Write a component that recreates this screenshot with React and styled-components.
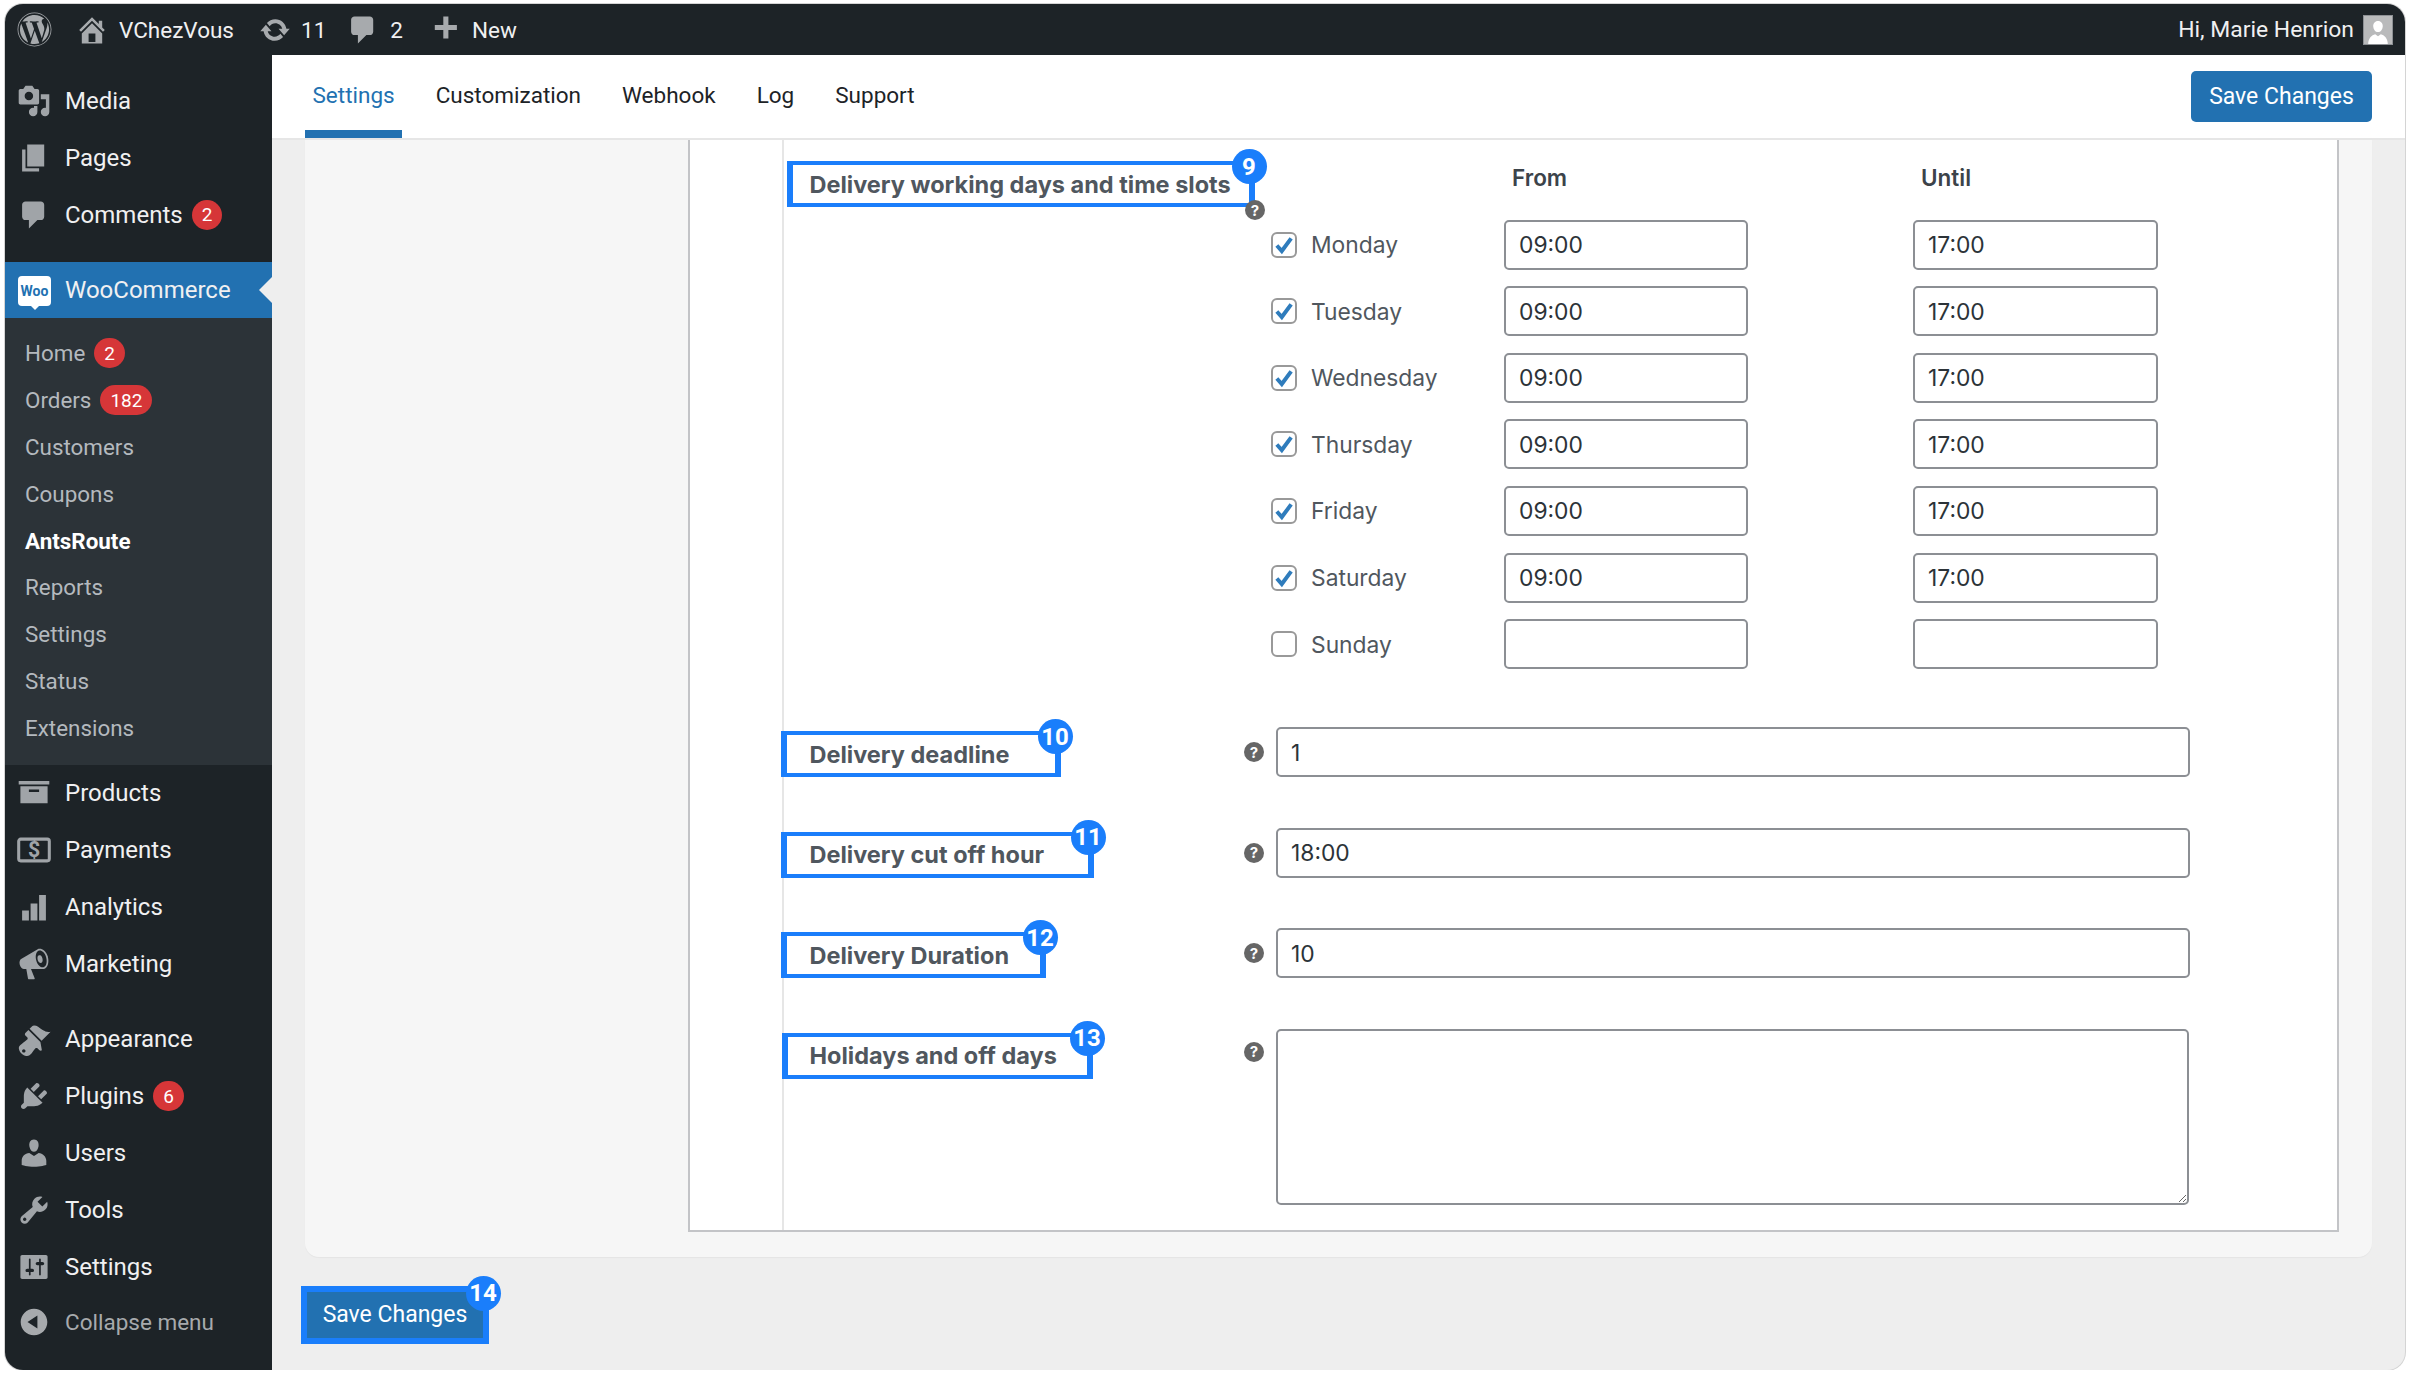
import React from 'react';
import styled, {createGlobalStyle} from 'styled-components';
import {FaWordpress} from 'react-icons/fa';

const GlobalStyle = createGlobalStyle`
    html, body {
        margin: 0;
        background: #fff;
        overflow: hidden;
    }
    body, input, textarea, button {
        font-family: Roboto, "Liberation Sans", sans-serif;
    }
`;

const ICONS = {
    home: 'M16 8.5l1.53 1.53-1.06 1.06L10 4.62l-6.47 6.47-1.06-1.06L10 2.5l4 4v-2h2v4zm-6-2.46l6 5.99V18H4v-5.97zM12 17v-5H8v5h4z',
    update: 'M10.2 3.28c3.53 0 6.43 2.61 6.92 6h2.08l-3.5 4-3.5-4h2.32c-.45-1.97-2.21-3.45-4.32-3.45-1.45 0-2.73.71-3.54 1.78L4.95 5.66C6.23 4.2 8.11 3.28 10.2 3.28zm-.4 13.44c-3.52 0-6.43-2.61-6.92-6H.8l3.5-4c1.17 1.33 2.33 2.67 3.5 4H5.48c.45 1.97 2.21 3.45 4.32 3.45 1.45 0 2.73-.71 3.54-1.78l1.71 1.95c-1.28 1.46-3.15 2.38-5.25 2.38z',
    comment: 'M5 2h9c1.1 0 2 .9 2 2v7c0 1.1-.9 2-2 2h-2l-5 5v-5H5c-1.1 0-2-.9-2-2V4c0-1.1.9-2 2-2z',
    plus: 'M17 7v3h-5v5H9v-5H4V7h5V2h3v5h5z',
    media: 'M13 11V4c0-.55-.45-1-1-1h-1.67L9 1H5L3.67 3H2c-.55 0-1 .45-1 1v7c0 .55.45 1 1 1h10c.55 0 1-.45 1-1zM7 4.5c1.38 0 2.5 1.12 2.5 2.5S8.38 9.5 7 9.5 4.5 8.38 4.5 7 5.62 4.5 7 4.5zM14 6h5v10.5c0 1.38-1.12 2.5-2.5 2.5S14 17.88 14 16.5s1.12-2.5 2.5-2.5c.17 0 .34.02.5.05V9h-3V6zm-4 8.05V13h2v3.5c0 1.38-1.12 2.5-2.5 2.5S7 17.88 7 16.5 8.12 14 9.5 14c.17 0 .34.02.5.05z',
    page: 'M6 15V2h10v13H6zm-1 1h8v2H3V5h2v11z',
    archive: 'M1 3h18v2H1V3zm1 3h16v10H2V6zm5 2v1.4h6V8H7z',
    chart: 'M3 12h4v6H3v-6zm5-4h4v10H8V8zm5-5h4v15h-4V3z',
    megaphone: 'M18.15 5.94c.46 1.62.38 3.22-.02 4.48-.42 1.28-1.26 2.18-2.3 2.48-.16.06-.26.06-.4.06-.06.02-.12.02-.18.02-.06.02-.14.02-.22.02h-6.8l2.22 5.5c.02.14-.06.26-.14.34-.08.1-.24.16-.34.16H6.95c-.1 0-.26-.06-.34-.16-.08-.08-.16-.2-.14-.34l-1-5.5H4.25l-.02-.02c-.5.06-1.08-.18-1.54-.62s-.88-1.08-1.06-1.88c-.24-.8-.2-1.56-.02-2.2.18-.62.58-1.08 1.06-1.3l.02-.02 9-5.4c.1-.06.18-.1.24-.16.06-.04.14-.08.24-.12.16-.08.28-.12.5-.18 1.04-.3 2.24.1 3.24.98s1.86 2.24 2.32 3.86zm-2.58 5.98h-.02c.4-.1.74-.34 1.04-.7.58-.7.86-1.76.86-3.04 0-.64-.1-1.3-.28-1.98-.34-1.36-1.02-2.5-1.78-3.24s-1.68-1.1-2.46-.88c-.82.22-1.4.96-1.7 2-.32 1.04-.28 2.36.06 3.72.38 1.36 1 2.5 1.8 3.24.78.74 1.62 1.1 2.48.88zm-2.54-7.08c.22-.04.42-.02.62.04.38.16.76.48 1.02 1s.42 1.2.42 1.78c0 .3-.04.56-.12.8-.18.48-.44.84-.86.94-.34.1-.8-.06-1.14-.4-.36-.34-.66-.88-.82-1.5-.16-.62-.16-1.22-.02-1.7.14-.46.42-.84.9-.96z',
    brush: 'M14.48 11.06L7.41 3.99l1.5-1.5c.5-.56 2.3-.47 3.51.32 1.21.8 1.43 1.28 2.91 2.1 1.18.64 2.45 1.26 4.45.85zm-.71.71L6.7 4.7 4.93 6.47c-.39.39-.39 1.02 0 1.41l1.06 1.06c.39.39.39 1.03 0 1.42-.6.6-1.43 1.11-2.21 1.69-.35.26-.7.53-1.01.84C1.43 13.71.96 14.57 1.1 15.61c.14 1.04.47 1.84 1.5 2.87s1.82 1.36 2.86 1.5c1.04.14 1.91-.33 2.75-1.17.31-.31.58-.66.84-1.01.58-.78 1.09-1.61 1.69-2.21.39-.39 1.03-.39 1.42 0l1.06 1.06c.39.39 1.02.39 1.41 0zM3 17c0-.55.45-1 1-1s1 .45 1 1-.45 1-1 1-1-.45-1-1z',
    plug: 'M13.11 4.36L9.87 7.6 8 5.73l3.24-3.24c.35-.34 1.05-.2 1.56.32.52.51.66 1.21.31 1.55zm-8 1.77l.91-1.12 9.01 9.01-1.19.84c-.71.71-2.63 1.16-3.82 1.16H6.14L4.9 17.26c-.59.59-1.54.59-2.12 0-.59-.58-.59-1.53 0-2.12l1.24-1.24v-3.88c0-1.13.4-3.19 1.09-3.89zm7.26 3.97l3.24-3.24c.34-.35 1.04-.21 1.55.31.52.51.66 1.21.31 1.55l-3.24 3.25z',
    user: 'M10 9.25c-2.27 0-2.73-3.44-2.73-3.44C7 4.02 7.82 2 9.97 2c2.16 0 2.98 2.02 2.71 3.81 0 0-.41 3.44-2.68 3.44zm0 2.57L12.72 10c2.39 0 4.52 2.33 4.52 4.53v2.49s-3.65 1.13-7.24 1.13c-3.65 0-7.24-1.13-7.24-1.13v-2.49c0-2.25 1.94-4.48 4.47-4.48z',
    wrench: 'M16.68 9.77c-1.34 1.34-3.3 1.67-4.95.99l-5.41 6.52c-.99.99-2.59.99-3.58 0s-.99-2.59 0-3.57l6.52-5.42c-.68-1.65-.35-3.61.99-4.95 1.28-1.28 3.12-1.62 4.72-1.06l-2.89 2.89 2.82 2.82 2.86-2.87c.53 1.58.18 3.39-1.08 4.65zM3.81 16.21c.4.39 1.04.39 1.43 0 .4-.4.4-1.04 0-1.43-.39-.4-1.03-.4-1.43 0-.39.39-.39 1.03 0 1.43z',
    sliders: 'M18 16V4c0-.55-.45-1-1-1H3c-.55 0-1 .45-1 1v12c0 .55.45 1 1 1h14c.55 0 1-.45 1-1zM8 11h1c.55 0 1 .45 1 1s-.45 1-1 1H8v1.5c0 .28-.22.5-.5.5s-.5-.22-.5-.5V13H6c-.55 0-1-.45-1-1s.45-1 1-1h1V5.5c0-.28.22-.5.5-.5s.5.22.5.5V11zm5-2h-1c-.55 0-1-.45-1-1s.45-1 1-1h1V5.5c0-.28.22-.5.5-.5s.5.22.5.5V7h1c.55 0 1 .45 1 1s-.45 1-1 1h-1v5.5c0 .28-.22.5-.5.5s-.5-.22-.5-.5V9z',
    collapse: 'M10 2.16c4.33 0 7.84 3.51 7.84 7.84s-3.51 7.84-7.84 7.84S2.16 14.33 2.16 10 5.71 2.16 10 2.16zm2 11.72V6.12L6.18 9.97z',
};

const Window = styled.div`
    box-sizing: border-box;
    width: 2400px;
    height: 1366px;
    margin: 4px 0 0 5px;
    display: flex;
    flex-direction: column;
    background: #eee;
    border-radius: 18px;
    overflow: hidden;
    box-shadow: 0 0 0 1px #d4d4d4;
`;

const AdminBar = styled.header`
    flex: 0 0 51px;
    display: flex;
    align-items: center;
    padding: 0 12px;
    background: #1d2327;
    color: #f0f0f1;
    font-size: 22.5px;
`;

const BarItem = styled.div`
    display: flex;
    align-items: center;
    gap: 10px;
    margin-right: ${props => props.$gap || 25}px;
`;

const Glyph = styled.svg`
    flex: none;
    width: ${props => props.$size || 34}px;
    height: ${props => props.$size || 34}px;
    fill: currentColor;
`;

const BarLogo = styled.span`
    display: flex;
    margin-right: 23px;
    color: #a7aaad;
    font-size: 35px;
`;

const BarIcon = styled.span`
    display: flex;
    color: #a7aaad;
`;

const Greeting = styled.div`
    margin-left: auto;
    display: flex;
    align-items: center;
    gap: 9px;
    font-size: 22.9px;
`;

const Avatar = styled.svg`
    width: 30px;
    height: 30px;
    background: #b9babb;
    border: 1px solid #8d9094;
    box-sizing: border-box;
    fill: #fff;
`;

const Body = styled.div`
    flex: 1;
    min-height: 0;
    display: flex;
`;

const Sidebar = styled.nav`
    flex: 0 0 267px;
    padding-top: 17px;
    background: #1d2327;
`;

const MenuGroup = styled.div`
    margin-bottom: ${props => props.$gap || 0}px;
`;

const MenuItem = styled.div`
    position: relative;
    height: ${props => props.$height || 57}px;
    display: flex;
    align-items: center;
    gap: 14px;
    padding-left: 12px;
    font-size: ${props => (props.$muted ? 22.5 : 24)}px;
    color: ${props => (props.$muted ? '#a7aaad' : '#f0f0f1')};
    background: ${props => (props.$active ? '#2271b1' : 'none')};

    ${Glyph} {
        color: ${props => (props.$muted ? '#a7aaad' : '#a0a4a8')};
    }

    ${props => props.$active && `
        &::after {
            content: '';
            position: absolute;
            right: 0;
            top: 15px;
            border: 13px solid transparent;
            border-left: 0;
            border-right-color: #eee;
        }
    `}
`;

const MenuLabel = styled.span`
    display: flex;
    align-items: center;
`;

const WooLogo = styled.span`
    position: relative;
    box-sizing: border-box;
    width: 33px;
    height: 30px;
    margin: 0 0 -2px 1px;
    display: flex;
    align-items: center;
    justify-content: center;
    background: #fff;
    border-radius: 4px;
    color: #2271b1;
    font-size: 14px;
    font-weight: 700;

    &::after {
        content: '';
        position: absolute;
        left: 13px;
        bottom: -4px;
        border: 4px solid transparent;
        border-top-color: #fff;
        border-bottom: 0;
    }
`;

const SubMenu = styled.div`
    padding: 12px 0 13.800px;
    background: #2c3338;
`;

const SubItem = styled.div`
    height: 46.800px;
    display: flex;
    align-items: center;
    padding-left: 20px;
    font-size: 22.4px;
    color: ${props => (props.$current ? '#fff' : '#b4b9be')};
    font-weight: ${props => (props.$current ? 700 : 400)};
`;

const Count = styled.span`
    box-sizing: border-box;
    min-width: 30px;
    height: 30px;
    margin-left: 9px;
    padding: 0 10px;
    display: flex;
    align-items: center;
    justify-content: center;
    background: #d63638;
    border-radius: 15px;
    color: #fff;
    font-size: 19px;
`;

const Main = styled.main`
    flex: 1;
    min-width: 0;
    display: flex;
    flex-direction: column;
`;

const TabBar = styled.div`
    flex: 0 0 85px;
    box-sizing: border-box;
    display: flex;
    align-items: stretch;
    justify-content: space-between;
    padding: 0 33px;
    background: #fff;
    border-bottom: 2px solid #e6e6e6;
`;

const Tabs = styled.div`
    display: flex;
    gap: 26px;
`;

const Tab = styled.div`
    padding: 0 7.500px 3px;
    display: flex;
    align-items: center;
    font-size: 22.5px;
    color: ${props => (props.$active ? '#2271b1' : '#1d2327')};
    ${props => props.$active && `
        box-shadow: inset 0 -8px 0 #2271b1;
        border-radius: 5px 5px 0 0;
    `}
`;

const PrimaryButton = styled.button`
    align-self: center;
    box-sizing: border-box;
    width: 181px;
    height: 51px;
    padding: 0;
    background: #2271b1;
    border: 0;
    border-radius: 5px;
    color: #fff;
    font-size: 23px;
`;

const Panel = styled.section`
    margin: 0 33px 29px 33px;
    padding: 0 33px 25px 383px;
    background: #f6f6f6;
    border-radius: 0 0 14px 14px;
    box-shadow: 0 1px 1px rgba(0, 0, 0, 0.04);
`;

const FormBox = styled.div`
    padding-left: 92px;
    background: #fff;
    border: 2px solid #c3c4c7;
    border-top: 0;
    font-family: Inter, "Liberation Sans", sans-serif;

    input, textarea {
        font-family: inherit;
    }
`;

const FormArea = styled.div`
    padding: 13px 147.500px 25px 0;
    border-left: 2px solid #e6e6e6;
`;

const DaysSection = styled.div`
    display: flex;
    align-items: flex-start;
    margin-bottom: 58px;
`;

const DaysLabelCell = styled.div`
    flex: 0 0 487px;
    padding-top: 8px;
`;

const Frame = styled.div`
    position: relative;
    box-sizing: border-box;
    width: ${props => props.$width}px;
    height: 46px;
    margin-left: ${props => props.$left}px;
    padding-left: ${props => 19.5 - props.$left}px;
    display: flex;
    align-items: center;
    border-style: solid;
    border-width: 4.5px 6px;
    border-color: #1a7efb;
    background: #fff;
    color: #50575e;
    font-size: 23.5px;
    font-weight: 700;
    white-space: nowrap;
`;

const Badge = styled.span`
    position: absolute;
    z-index: 1;
    top: -16px;
    right: -17.5px;
    width: 35px;
    height: 35px;
    display: flex;
    align-items: center;
    justify-content: center;
    background: #1a7efb;
    border-radius: 50%;
    color: #fff;
    font-family: Roboto, sans-serif;
    font-size: 24px;
    font-weight: 700;
`;

const Help = styled.span`
    flex: none;
    width: 20px;
    height: 20px;
    display: flex;
    align-items: center;
    justify-content: center;
    background: #666;
    border-radius: 50%;
    color: #fff;
    font-size: 15px;
    font-weight: 700;
`;

const FrameHelp = styled(Help)`
    position: absolute;
    z-index: 1;
    right: -16px;
    bottom: -17px;
`;

const Schedule = styled.div`
    display: grid;
    grid-template-columns: 233px 244px 165px 245px;
    grid-auto-rows: 50px;
    row-gap: 16.6px;
    align-items: center;
`;

const ColumnHead = styled.div`
    padding: 0 0 2px 8px;
    color: #3c434a;
    font-size: 22.5px;
    font-weight: 600;
`;

const DayLabel = styled.label`
    display: flex;
    align-items: center;
    gap: 14px;
    color: #50575e;
    font-size: 22.8px;
`;

const Check = styled.span`
    box-sizing: border-box;
    width: 26px;
    height: 26px;
    display: flex;
    align-items: center;
    justify-content: center;
    background: #fff;
    border: 2px solid #999;
    border-radius: 6px;

    svg {
        width: 22px;
        height: 22px;
        fill: none;
        stroke: #2f7cbc;
        stroke-width: 3.6;
    }
`;

const TextField = styled.input`
    box-sizing: border-box;
    display: block;
    width: 100%;
    height: 50px;
    padding: 0 13px;
    background: #fff;
    border: 2px solid #8c8f94;
    border-radius: 5px;
    color: #2c3338;
    font-size: 22.8px;
    outline: none;
`;

const FieldRow = styled.div`
    display: flex;
    align-items: flex-start;
    margin-bottom: ${props => (props.$last ? 0 : 50.5)}px;
`;

const FieldLabelCell = styled.div`
    flex: 0 0 460px;
    padding-top: 4px;
`;

const FieldHelp = styled(Help)`
    margin: ${props => (props.$top ? 13 : 15)}px 12px 0 0;
`;

const AreaField = styled.textarea`
    box-sizing: border-box;
    display: block;
    flex: 1;
    height: 176px;
    margin-right: 1px;
    background: #fff;
    border: 2px solid #8c8f94;
    border-radius: 5px;
    outline: none;
    resize: both;
`;

const SaveFrame = styled.div`
    position: relative;
    box-sizing: border-box;
    width: 188px;
    height: 58px;
    margin-left: 29px;
    border: 6px solid #1a7efb;
    background: #2271b1;
    display: flex;
    align-items: center;
    justify-content: center;
    color: #fff;
    font-size: 23px;
`;

const Icon = ({name, size}) => (
    <Glyph viewBox="0 0 20 20" $size={size}>
        <path fillRule="evenodd" d={ICONS[name]} />
    </Glyph>
);

const PaymentsIcon = () => (
    <Glyph viewBox="0 0 20 20">
        <rect x="1" y="3.6" width="18" height="12.8" rx="1.2" fill="none" stroke="currentColor" strokeWidth="1.8" />
        <text x="10" y="14.4" fontSize="12.5" fontWeight="700" textAnchor="middle" fontFamily="Roboto">$</text>
    </Glyph>
);

const topMenu = [
    {icon: 'media', label: 'Media'},
    {icon: 'page', label: 'Pages'},
    {icon: 'comment', label: 'Comments', count: 2},
];

const wooMenu = [
    {label: 'Home', count: 2},
    {label: 'Orders', count: 182},
    {label: 'Customers'},
    {label: 'Coupons'},
    {label: 'AntsRoute', current: true},
    {label: 'Reports'},
    {label: 'Settings'},
    {label: 'Status'},
    {label: 'Extensions'},
];

const shopMenu = [
    {icon: 'archive', label: 'Products'},
    {label: 'Payments', payments: true},
    {icon: 'chart', label: 'Analytics'},
    {icon: 'megaphone', label: 'Marketing'},
];

const adminMenu = [
    {icon: 'brush', label: 'Appearance'},
    {icon: 'plug', label: 'Plugins', count: 6},
    {icon: 'user', label: 'Users'},
    {icon: 'wrench', label: 'Tools'},
    {icon: 'sliders', label: 'Settings'},
];

const tabs = ['Settings', 'Customization', 'Webhook', 'Log', 'Support'];

const days = [
    {name: 'Monday', on: true},
    {name: 'Tuesday', on: true},
    {name: 'Wednesday', on: true},
    {name: 'Thursday', on: true},
    {name: 'Friday', on: true},
    {name: 'Saturday', on: true},
    {name: 'Sunday', on: false},
];

const fields = [
    {label: 'Delivery deadline', badge: 10, value: '1', width: 280, left: -3},
    {label: 'Delivery cut off hour', badge: 11, value: '18:00', width: 313, left: -3},
    {label: 'Delivery Duration', badge: 12, value: '10', width: 265, left: -3},
];

const MenuList = ({items}) => items.map(item => (
    <MenuItem key={item.label}>
        {item.payments ? <PaymentsIcon /> : <Icon name={item.icon} />}
        <MenuLabel>
            {item.label}
            {item.count && <Count>{item.count}</Count>}
        </MenuLabel>
    </MenuItem>
));

const App = () => (
    <>
        <GlobalStyle />
        <Window>
            <AdminBar>
                <BarLogo><FaWordpress /></BarLogo>
                <BarItem>
                    <BarIcon><Icon name="home" /></BarIcon>
                    VChezVous
                </BarItem>
                <BarItem $gap={20}>
                    <BarIcon><Icon name="update" size={32} /></BarIcon>
                    11
                </BarItem>
                <BarItem>
                    <BarIcon><Icon name="comment" /></BarIcon>
                    2
                </BarItem>
                <BarItem>
                    <BarIcon><Icon name="plus" /></BarIcon>
                    New
                </BarItem>
                <Greeting>
                    Hi, Marie Henrion
                    <Avatar viewBox="0 0 20 20">
                        <path d="M10 3.5c2.2 0 3.6 1.9 3.4 4-.2 2.2-1.5 4-3.4 4s-3.2-1.800-3.400-4c-.2-2.100 1.200-4 3.400-4zM3 20c0-4 2.500-6.500 5-7l2 1.400 2-1.400c2.500.5 5 3 5 7H3z" />
                    </Avatar>
                </Greeting>
            </AdminBar>
            <Body>
                <Sidebar>
                    <MenuGroup $gap={19}>
                        <MenuList items={topMenu} />
                    </MenuGroup>
                    <MenuItem $active $height={56}>
                        <WooLogo>Woo</WooLogo>
                        <span>WooCommerce</span>
                    </MenuItem>
                    <SubMenu>
                        {wooMenu.map(item => (
                            <SubItem key={item.label} $current={item.current}>
                                {item.label}
                                {item.count && <Count>{item.count}</Count>}
                            </SubItem>
                        ))}
                    </SubMenu>
                    <MenuGroup $gap={18}>
                        <MenuList items={shopMenu} />
                    </MenuGroup>
                    <MenuList items={adminMenu} />
                    <MenuItem $muted $height={52}>
                        <Icon name="collapse" />
                        <span>Collapse menu</span>
                    </MenuItem>
                </Sidebar>
                <Main>
                    <TabBar>
                        <Tabs>
                            {tabs.map((tab, index) => (
                                <Tab key={tab} $active={index === 0}>{tab}</Tab>
                            ))}
                        </Tabs>
                        <PrimaryButton>Save Changes</PrimaryButton>
                    </TabBar>
                    <Panel>
                        <FormBox>
                            <FormArea>
                                <DaysSection>
                                    <DaysLabelCell>
                                        <Frame $width={468} $left={3}>
                                            Delivery working days and time slots
                                            <Badge>9</Badge>
                                            <FrameHelp>?</FrameHelp>
                                        </Frame>
                                    </DaysLabelCell>
                                    <Schedule>
                                        <span />
                                        <ColumnHead>From</ColumnHead>
                                        <span />
                                        <ColumnHead>Until</ColumnHead>
                                        {days.map(day => (
                                            <React.Fragment key={day.name}>
                                                <DayLabel>
                                                    <Check>
                                                        {day.on && (
                                                            <svg viewBox="0 0 20 20">
                                                                <path d="M3.500 10.500l4.500 5L16.500 4" />
                                                            </svg>
                                                        )}
                                                    </Check>
                                                    {day.name}
                                                </DayLabel>
                                                <TextField readOnly defaultValue={day.on ? '09:00' : ''} />
                                                <span />
                                                <TextField readOnly defaultValue={day.on ? '17:00' : ''} />
                                            </React.Fragment>
                                        ))}
                                    </Schedule>
                                </DaysSection>
                                {fields.map(field => (
                                    <FieldRow key={field.label}>
                                        <FieldLabelCell>
                                            <Frame $width={field.width} $left={field.left}>
                                                {field.label}
                                                <Badge>{field.badge}</Badge>
                                            </Frame>
                                        </FieldLabelCell>
                                        <FieldHelp>?</FieldHelp>
                                        <TextField readOnly defaultValue={field.value} />
                                    </FieldRow>
                                ))}
                                <FieldRow $last>
                                    <FieldLabelCell>
                                        <Frame $width={311} $left={-2}>
                                            Holidays and off days
                                            <Badge>13</Badge>
                                        </Frame>
                                    </FieldLabelCell>
                                    <FieldHelp $top>?</FieldHelp>
                                    <AreaField readOnly />
                                </FieldRow>
                            </FormArea>
                        </FormBox>
                    </Panel>
                    <SaveFrame>
                        Save Changes
                        <Badge>14</Badge>
                    </SaveFrame>
                </Main>
            </Body>
        </Window>
    </>
);

export default App;
